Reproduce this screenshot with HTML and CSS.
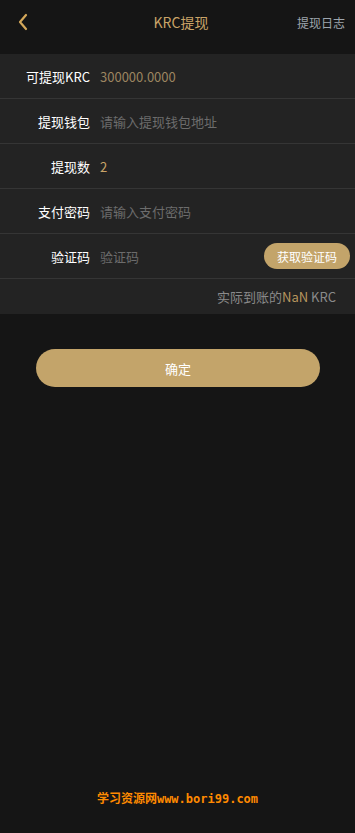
FILE: index.html
```html
<!DOCTYPE html>
<html lang="zh-CN">
<head>
    <meta charset="UTF-8">
    <meta name="viewport" content="width=device-width, initial-scale=1.0">
    <title>KRC提现</title>
    <link rel="stylesheet" href="styles.css">
</head>
<body>
    <div class="page">
        <div class="topbar">
            <a class="back">
                <svg width="12" height="18" viewBox="0 0 12 18"><path d="M9 2 L3 9 L9 16" fill="none" stroke="#d4a85a" stroke-width="2.2" stroke-linecap="round" stroke-linejoin="round"/></svg>
            </a>
            <div class="title">KRC提现</div>
            <a class="log">提现日志</a>
        </div>

        <div class="form">
            <div class="row">
                <div class="label">可提现KRC</div>
                <div class="value">300000.0000</div>
            </div>
            <div class="row">
                <div class="label">提现钱包</div>
                <input type="text" placeholder="请输入提现钱包地址">
            </div>
            <div class="row">
                <div class="label">提现数</div>
                <input type="text" class="num" value="2">
            </div>
            <div class="row">
                <div class="label">支付密码</div>
                <input type="password" placeholder="请输入支付密码">
            </div>
            <div class="row">
                <div class="label">验证码</div>
                <input type="text" placeholder="验证码">
                <button class="code-btn">获取验证码</button>
            </div>
            <div class="note"><p>实际到账的<span>NaN</span> KRC</p></div>
        </div>

        <div class="submit-wrap">
            <button class="submit">确定</button>
        </div>

        <div class="watermark">学习资源网www.bori99.com</div>
    </div>
</body>
</html>
```

FILE: styles.css
```css
* {
    margin: 0;
    padding: 0;
    box-sizing: border-box;
    font-family: "Noto Sans CJK SC", "Noto Sans", sans-serif;
}

body {
    background: #151515;
    color: #fff;
}

.page {
    min-height: 833px;
    display: flex;
    flex-direction: column;
}

.topbar {
    height: 54px;
    display: flex;
    align-items: center;
    justify-content: space-between;
    padding: 0 10px 10px 17px;
    background: #151515;
}

.back {
    width: 60px;
    display: flex;
    align-items: center;
}

.title {
    font-size: 14px;
    color: #c9a468;
}

.log {
    width: 60px;
    text-align: right;
    font-size: 12px;
    color: #9ea6ae;
}

.form {
    background: #232323;
}

.row {
    height: 45px;
    display: flex;
    align-items: center;
    border-bottom: 1px solid #353535;
    padding-right: 5px;
}

.label {
    width: 90px;
    text-align: right;
    font-size: 13px;
    color: #fff;
    margin-right: 10px;
}

.value {
    font-size: 13px;
    color: #9c8560;
}

input {
    flex: 1;
    min-width: 0;
    background: transparent;
    border: none;
    outline: none;
    font-size: 13px;
    color: #c9a468;
}

input::placeholder {
    color: #6c6c6c;
}

.code-btn {
    width: 86px;
    height: 26px;
    border: none;
    border-radius: 13px;
    background: #c3a46a;
    color: #fff;
    font-size: 12px;
}

.note {
    height: 35px;
    display: flex;
    align-items: center;
    justify-content: flex-end;
    padding-right: 19px;
    font-size: 13px;
    color: #8a8a8a;
}

.note span {
    color: #b8965e;
}

.submit-wrap {
    padding: 35px 35px 0 36px;
}

.submit {
    width: 100%;
    height: 38px;
    border: none;
    border-radius: 19px;
    background: #c3a46a;
    color: #fff;
    font-size: 13px;
}

.watermark {
    margin-top: auto;
    margin-bottom: 27px;
    text-align: center;
    font-size: 12px;
    font-weight: 700;
    color: #ff8a00;
    font-family: "DejaVu Sans Mono", "Noto Sans CJK SC", monospace;
}
```
